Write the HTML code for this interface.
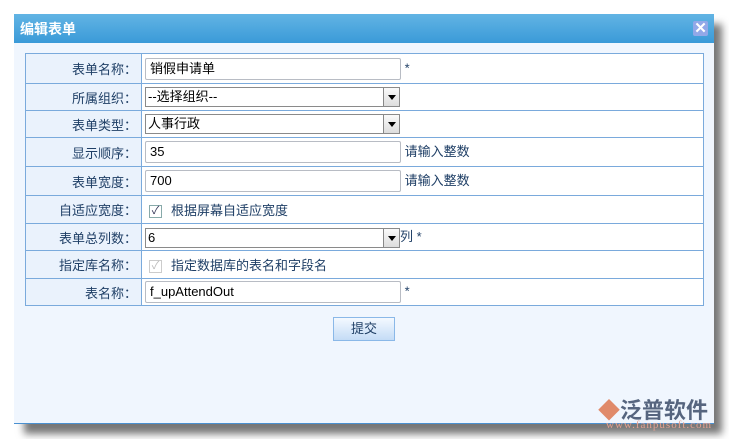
<!DOCTYPE html>
<html><head><meta charset="utf-8"><style>
*{margin:0;padding:0;box-sizing:border-box}
body{width:729px;height:439px;background:#fff;position:relative;overflow:hidden;font-family:"Liberation Sans","Noto Sans CJK SC",sans-serif;font-size:13px;color:#000}
.shadow{position:absolute;left:24px;top:24px;width:698px;height:410px;background:#777;filter:blur(4px)}
.dlg{position:absolute;left:14px;top:14px;width:700px;height:410px;background:#f0f6fe;border-bottom:1px solid #4a90d0}
.hd{height:29px;background:linear-gradient(#62b4e4,#3a9ad8);color:#fff;font-weight:bold;font-size:14px;line-height:30px;padding-left:6px}
.x{position:absolute;right:6px;top:7px;width:15px;height:15px;background:#92a8e8;border-radius:2px;color:#fff;font-size:15px;line-height:15px;text-align:center;font-weight:bold}
table{position:absolute;left:11px;top:39px;width:679px;border-collapse:collapse}
td{border:1px solid #7aaadc;padding:0}
td.l{width:116px;background:#eaf2fc;text-align:right;padding-right:4px;color:#1f3f66}
td.v{background:#fff;padding-left:3px;color:#1f3f66}
.in{display:inline-block;width:256px;height:22px;border:1px solid #b8bcc4;border-radius:2px;vertical-align:middle;padding-left:4px;line-height:20px;color:#000}
.sel{display:inline-block;width:255px;height:20px;border:1px solid #8a8a8a;vertical-align:middle;padding-left:2px;line-height:18px;position:relative;color:#000}
.sel b{position:absolute;right:0;top:0;width:16px;height:18px;border-left:1px solid #888;background:linear-gradient(#fafafa,#ddd)}
.sel b:after{content:"";position:absolute;left:4px;top:7px;border:4px solid transparent;border-top:5px solid #000}
.cb{display:inline-block;width:13px;height:13px;border:1px solid #8aa;vertical-align:middle;margin:0 9px 0 4px;font-size:11px;line-height:11px;text-align:center;color:#335}
.btn{position:absolute;left:319px;top:303px;width:62px;height:24px;border:1px solid #8ab8e8;background:linear-gradient(#f4f9ff,#c4dcf6);text-align:center;line-height:22px;color:#1f3f66}
.logo{position:absolute;left:598px;top:393px;font-size:22px;color:#56657f;font-weight:bold}
.url{position:absolute;left:606px;top:419px;font-size:11px;color:#e3a090;letter-spacing:1px;font-family:"Liberation Serif",serif}
</style></head><body>
<div class="shadow"></div>
<div class="dlg">
<div class="hd">编辑表单</div><div class="x">✕</div>
<table>
<tr style="height:30px"><td class="l">表单名称：</td><td class="v"><span class="in">销假申请单</span> *</td></tr>
<tr style="height:27px"><td class="l">所属组织：</td><td class="v"><span class="sel">--选择组织--<b></b></span></td></tr>
<tr style="height:27px"><td class="l">表单类型：</td><td class="v"><span class="sel">人事行政<b></b></span></td></tr>
<tr style="height:29px"><td class="l">显示顺序：</td><td class="v"><span class="in">35</span> 请输入整数</td></tr>
<tr style="height:29px"><td class="l">表单宽度：</td><td class="v"><span class="in">700</span> 请输入整数</td></tr>
<tr style="height:28px"><td class="l">自适应宽度：</td><td class="v"><span class="cb">✓</span>根据屏幕自适应宽度</td></tr>
<tr style="height:27px"><td class="l">表单总列数：</td><td class="v"><span class="sel">6<b></b></span>列 *</td></tr>
<tr style="height:28px"><td class="l">指定库名称：</td><td class="v"><span class="cb" style="color:#bbb;border-color:#ccc">✓</span>指定数据库的表名和字段名</td></tr>
<tr style="height:27px"><td class="l">表名称：</td><td class="v"><span class="in">f_upAttendOut</span> *</td></tr>
</table>
<div class="btn">提交</div>
</div>
<div class="logo"><span style="color:#e08a6a">◆</span>泛普软件</div>
<div class="url">www.fanpusoft.com</div>
</body></html>
